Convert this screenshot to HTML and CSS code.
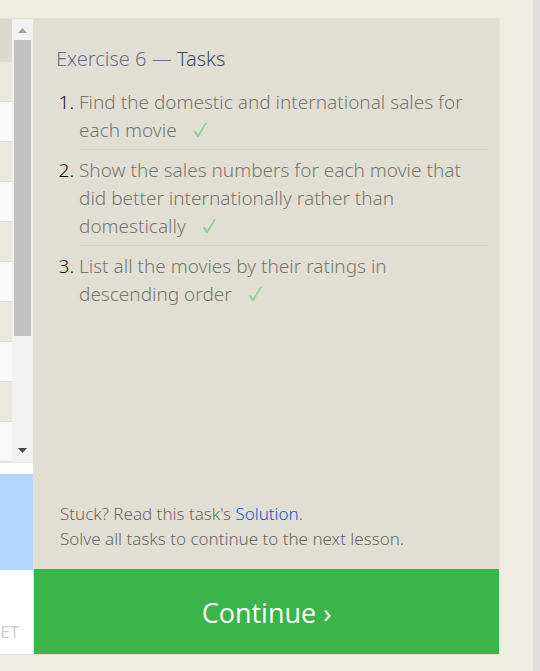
FILE: index.html
```html
<!DOCTYPE html>
<html lang="en">
<head>
<meta charset="utf-8">
<meta name="viewport" content="width=device-width, initial-scale=1">
<title>Exercise 6 — Tasks</title>
<link rel="stylesheet" href="styles.css">
</head>
<body>
<main class="lesson">
  <section class="workspace">
    <div class="results">
      <div class="rows">
        <div class="row head"></div>
        <div class="row"></div>
        <div class="row"></div>
        <div class="row"></div>
        <div class="row"></div>
        <div class="row"></div>
        <div class="row"></div>
        <div class="row"></div>
        <div class="row"></div>
        <div class="row"></div>
        <div class="row"></div>
      </div>
      <div class="scrollbar">
        <svg class="arrow" viewBox="0 0 9 5"><path d="M0 5 4.500 0 9 5z" fill="#a0a0a0"/></svg>
        <div class="thumb"></div>
        <svg class="arrow" viewBox="0 0 9 5"><path d="M0 0 4.500 5 9 0z" fill="#484848"/></svg>
      </div>
    </div>
    <div class="editor">
      <div class="selection"></div>
      <button class="reset" type="button">ET</button>
    </div>
  </section>
  <section class="tasks">
    <h1 class="title">Exercise 6 — <span class="title-strong">Tasks</span></h1>
    <ol class="list">
      <li class="task"><p class="task-text">Find the domestic and international sales for each movie<svg class="check" viewBox="0 0 14 16"><path d="M1 9.500 2.500 9 5 13 12.500 1 13.500 1 5.500 15 4.500 15z" /></svg></p></li>
      <li class="task"><p class="task-text">Show the sales numbers for each movie that did better internationally rather than domestically<svg class="check" viewBox="0 0 14 16"><path d="M1 9.500 2.500 9 5 13 12.500 1 13.500 1 5.500 15 4.500 15z" /></svg></p></li>
      <li class="task"><p class="task-text">List all the movies by their ratings in descending order<svg class="check" viewBox="0 0 14 16"><path d="M1 9.500 2.500 9 5 13 12.500 1 13.500 1 5.500 15 4.500 15z" /></svg></p></li>
    </ol>
    <p class="hint">Stuck? Read this task's <a class="link" href="#solution">Solution</a>.<br>Solve all tasks to continue to the next lesson.</p>
    <button class="continue" type="button">Continue ›</button>
  </section>
</main>
</body>
</html>
```

FILE: styles.css
```css
* {
  box-sizing: border-box;
}

body {
  margin: 0;
  background: #efece3;
  font-family: "Noto Sans", "Open Sans", sans-serif;
}

.lesson {
  display: grid;
  grid-template-columns: 33px 1fr;
  min-height: 100vh;
  padding: 18px 33px 16px 0;
  border-right: 7px solid #e3dcdc;
}

.workspace {
  display: flex;
  flex-direction: column;
  border-top: 1px solid #e2e2d8;
  border-bottom: 1px solid #e2e2d8;
  background: #fff;
}

.results {
  display: grid;
  grid-template-columns: 12px 21px;
  height: 444px;
  border-bottom: 1px solid #e6e6dc;
  overflow: hidden;
}

.row {
  height: 40px;
  border-bottom: 1px solid #dcdcdc;
  background: #f9f9f9;
}

.row:nth-child(even) {
  background: #e9e9e1;
}

.row.head {
  height: 43px;
  border-bottom-color: #dcdcd2;
  background: #d9d9cd;
}

.scrollbar {
  display: flex;
  flex-direction: column;
  align-items: center;
  padding: 9px 2px;
  background: #f1f1f1;
}

.arrow {
  display: block;
  width: 9px;
  height: 5px;
}

.thumb {
  width: 17px;
  height: 296px;
  margin: 7px 0 auto;
  background: #c1c1c1;
}

.editor {
  display: flex;
  flex: 1;
  flex-direction: column;
  padding-top: 11px;
}

.selection {
  height: 96px;
  background: #b4d5fe;
}

.reset {
  margin: auto 14px 10px 0;
  padding: 0;
  border: 0;
  background: none;
  color: #ccc;
  font: 17px/24px "Open Sans", sans-serif;
  text-align: right;
}

.tasks {
  display: flex;
  flex-direction: column;
  border: 1px solid #e2e2d6;
  background: #e1dfd3;
}

.title {
  margin: 26px 22px 0;
  color: #667086;
  font-size: 20px;
  font-weight: 300;
  line-height: 28px;
}

.title-strong {
  color: #3e4c66;
}

.list {
  margin: 15px 10px 0 45px;
  padding: 0;
  color: #111;
  font-size: 19px;
  font-weight: 300;
  line-height: 28px;
}

.task + .task {
  margin-top: 6px;
}

.task-text {
  margin: 0;
  padding-bottom: 5px;
  border-bottom: 1px solid #d7d5ca;
  color: #787770;
}

.task:last-child .task-text {
  border-bottom: 0;
}

.check {
  width: 14px;
  height: 16px;
  margin-left: 16px;
  vertical-align: -1px;
  fill: #8bcf93;
  stroke: #8bcf93;
  stroke-width: 0.5;
}

.hint {
  margin: auto 26px 18px;
  color: #6a6766;
  font-size: 17px;
  font-weight: 300;
  line-height: 25px;
}

.link {
  color: #0a58d8;
  text-decoration: none;
}

.continue {
  height: 85px;
  padding: 2px 0 0;
  border: 0;
  background: #3bb54a;
  color: #fff;
  font: 27px/36px "Open Sans", sans-serif;
}
```
